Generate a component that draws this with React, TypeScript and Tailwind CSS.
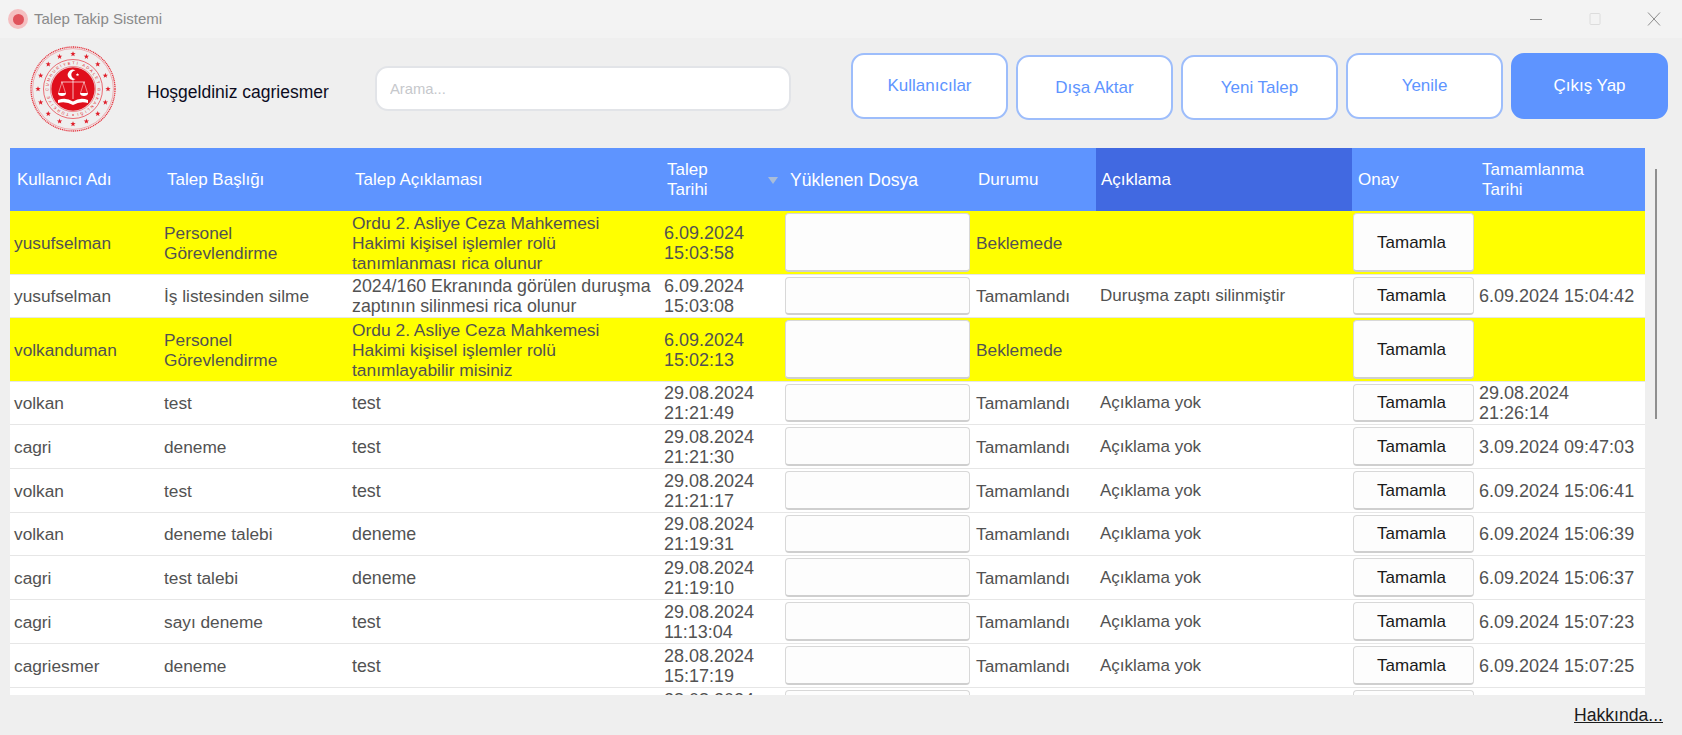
// Talep Takip Sistemi - request tracking window

import React from 'react';

const columns = 'grid grid-cols-[150px_188px_312px_124px_188px_124px_256px_123px_170px]';

type Row = {
  user: string;
  title: string;
  desc: string[];
  date: string[];
  status: string;
  note: string;
  done: string[];
  height: string;
  yellow?: boolean;
};

const rows: Row[] = [
  { user: 'yusufselman', title: 'Personel Görevlendirme', desc: ['Ordu 2. Asliye Ceza Mahkemesi', 'Hakimi kişisel işlemler rolü', 'tanımlanması rica olunur'], date: ['6.09.2024', '15:03:58'], status: 'Beklemede', note: '', done: [], height: 'h-[63.7px]', yellow: true },
  { user: 'yusufselman', title: 'İş listesinden silme', desc: ['2024/160 Ekranında görülen duruşma', 'zaptının silinmesi rica olunur'], date: ['6.09.2024', '15:03:08'], status: 'Tamamlandı', note: 'Duruşma zaptı silinmiştir', done: ['6.09.2024 15:04:42'], height: 'h-[43px]' },
  { user: 'volkanduman', title: 'Personel Görevlendirme', desc: ['Ordu 2. Asliye Ceza Mahkemesi', 'Hakimi kişisel işlemler rolü', 'tanımlayabilir misiniz'], date: ['6.09.2024', '15:02:13'], status: 'Beklemede', note: '', done: [], height: 'h-[64.3px]', yellow: true },
  { user: 'volkan', title: 'test', desc: ['test'], date: ['29.08.2024', '21:21:49'], status: 'Tamamlandı', note: 'Açıklama yok', done: ['29.08.2024', '21:26:14'], height: 'h-[43px]' },
  { user: 'cagri', title: 'deneme', desc: ['test'], date: ['29.08.2024', '21:21:30'], status: 'Tamamlandı', note: 'Açıklama yok', done: ['3.09.2024 09:47:03'], height: 'h-[43.8px]' },
  { user: 'volkan', title: 'test', desc: ['test'], date: ['29.08.2024', '21:21:17'], status: 'Tamamlandı', note: 'Açıklama yok', done: ['6.09.2024 15:06:41'], height: 'h-[43.8px]' },
  { user: 'volkan', title: 'deneme talebi', desc: ['deneme'], date: ['29.08.2024', '21:19:31'], status: 'Tamamlandı', note: 'Açıklama yok', done: ['6.09.2024 15:06:39'], height: 'h-[43.8px]' },
  { user: 'cagri', title: 'test talebi', desc: ['deneme'], date: ['29.08.2024', '21:19:10'], status: 'Tamamlandı', note: 'Açıklama yok', done: ['6.09.2024 15:06:37'], height: 'h-[43.8px]' },
  { user: 'cagri', title: 'sayı deneme', desc: ['test'], date: ['29.08.2024', '11:13:04'], status: 'Tamamlandı', note: 'Açıklama yok', done: ['6.09.2024 15:07:23'], height: 'h-[43.8px]' },
  { user: 'cagriesmer', title: 'deneme', desc: ['test'], date: ['28.08.2024', '15:17:19'], status: 'Tamamlandı', note: 'Açıklama yok', done: ['6.09.2024 15:07:25'], height: 'h-[43.8px]' },
  { user: '', title: '', desc: [''], date: ['28.08.2024', '15:10:02'], status: '', note: '', done: [], height: 'h-[43.8px]' },
];

function starPoints(cx: number, cy: number, r: number) {
  const pts: string[] = [];
  for (let i = 0; i < 10; i++) {
    const rad = i % 2 === 0 ? r : r * 0.42;
    const a = (Math.PI / 5) * i - Math.PI / 2;
    pts.push(`${(cx + rad * Math.cos(a)).toFixed(2)},${(cy + rad * Math.sin(a)).toFixed(2)}`);
  }
  return pts.join(' ');
}

function Seal() {
  const stars = Array.from({ length: 16 }, (_, i) => (Math.PI / 8) * i);
  return (
    <svg viewBox="0 0 88 86" className="w-[88px] h-[86px] shrink-0">
      <circle cx="44" cy="43" r="42" fill="none" stroke="#e5323d" strokeWidth="1.3" strokeDasharray="1.2 0.7" />
      <circle cx="44" cy="43" r="40.4" fill="none" stroke="#ee6a72" strokeWidth="0.5" />
      {stars.map((a) => (
        <polygon key={a} points={starPoints(44 + 35 * Math.cos(a), 43 + 35 * Math.sin(a), 2.8)} fill="#e01f2b" />
      ))}
      <circle cx="44" cy="43" r="29.5" fill="none" stroke="#e5323d" strokeWidth="0.7" />
      <circle cx="44" cy="43" r="22.6" fill="none" stroke="#e5323d" strokeWidth="0.5" />
      <path id="sealRing" d="M44 67.6 A24.6 24.6 0 1 1 44.01 67.6" fill="none" />
      <text fontSize="4" fontWeight="400" fill="#e01f2b" fontFamily="'Liberation Sans', sans-serif">
        <textPath href="#sealRing" startOffset="4" textLength="146">TÜRKİYE CUMHURİYETİ ADALET BAKANLIĞI</textPath>
      </text>
      <circle cx="44" cy="43" r="21.7" fill="#e00f1c" />
      <path d="M46.5 24.5 a5 5 0 1 0 0 8.4 a4.1 4.1 0 1 1 0 -8.4z" fill="#fff" />
      <polygon points={starPoints(48.5, 28.7, 1.8)} fill="#fff" />
      <g stroke="#fff" strokeWidth="0.7" fill="none">
        <path d="M44 33 V53" />
        <path d="M32 36 H56" />
        <path d="M33 36 L29.5 47 M33 36 L36.5 47 M55 36 L51.5 47 M55 36 L58.5 47" strokeWidth="0.5" />
      </g>
      <path d="M29 47 H37 A4 3 0 0 1 29 47z M51 47 H59 A4 3 0 0 1 51 47z" fill="#fff" />
      <path d="M29 54 Q37 51 44 55.5 Q51 51 59 54 V57 Q51 55 44 59 Q37 55 29 57z" fill="#fff" />
      <circle cx="44" cy="69" r="0.8" fill="#e01f2b" />
    </svg>
  );
}

function TitleBar() {
  return (
    <div className="h-[38px] shrink-0 bg-[#f3f3f3] flex items-center">
      <div className="ml-[8px] w-[20px] h-[20px] rounded-full bg-[#f5bfc1] flex items-center justify-center">
        <div className="w-[11px] h-[11px] rounded-full bg-[#e0535c]" />
      </div>
      <span className="ml-[6px] text-[15px] text-[#8a8a8a]">Talep Takip Sistemi</span>
      <div className="ml-auto flex items-center">
        <svg width="14" height="14" viewBox="0 0 14 14" className="mr-[45px]">
          <path d="M1 7.5 H13" stroke="#8c8c8c" strokeWidth="1" />
        </svg>
        <svg width="14" height="14" viewBox="0 0 14 14" className="mr-[45px]">
          <rect x="2" y="1.5" width="10" height="11" rx="1" fill="none" stroke="#dcdcdc" strokeWidth="1" />
        </svg>
        <svg width="14" height="14" viewBox="0 0 14 14" className="mr-[21px]">
          <path d="M1 0.5 L13 13.5 M13 0.5 L1 13.5" stroke="#8c8c8c" strokeWidth="1" />
        </svg>
      </div>
    </div>
  );
}

function TopButton({ label, low, solid }: { label: string; low?: boolean; solid?: boolean }) {
  return (
    <button
      className={`w-[157px] rounded-[13px] border-2 text-[17px] flex items-center justify-center ${
        low ? 'mt-[2px] h-[65px]' : 'h-[66px]'
      } ${solid ? 'bg-[#5e94ff] border-[#5e94ff] text-white' : 'bg-white border-[#9dbdfb] text-[#5e94ff]'}`}
    >
      {label}
    </button>
  );
}

function Header() {
  return (
    <div className="h-[110px] shrink-0 flex items-start">
      <div className="ml-[29px] mt-[8px]">
        <Seal />
      </div>
      <span className="ml-[30px] mt-[41px] text-[17.5px] text-[#0c0c1e]">Hoşgeldiniz cagriesmer</span>
      <input
        placeholder="Arama..."
        className="ml-[46px] mt-[28px] w-[416px] h-[45px] rounded-[13px] border-2 border-[#e2e4e8] bg-white px-[13px] text-[14.8px] outline-none placeholder:text-[#c6c8cc]"
      />
      <div className="ml-auto mr-[14px] mt-[15px] flex items-start gap-[8px]">
        <TopButton label="Kullanıcılar" />
        <TopButton label="Dışa Aktar" low />
        <TopButton label="Yeni Talep" low />
        <TopButton label="Yenile" />
        <TopButton label="Çıkış Yap" solid />
      </div>
    </div>
  );
}

function TableHead() {
  return (
    <div className={`${columns} h-[63px] bg-[#5e94ff] text-white text-[17px] leading-[20px]`}>
      <div className="flex items-center pl-[7px]">Kullanıcı Adı</div>
      <div className="flex items-center pl-[7px]">Talep Başlığı</div>
      <div className="flex items-center pl-[7px]">Talep Açıklaması</div>
      <div className="relative flex items-center pl-[7px]">
        <span>Talep<br />Tarihi</span>
        <span className="absolute right-[6px] top-[29px] border-x-[5px] border-t-[7px] border-x-transparent border-t-[#a9bdd9]" />
      </div>
      <div className="flex items-center pl-[6px] text-[17.6px]">Yüklenen Dosya</div>
      <div className="flex items-center pl-[6px]">Durumu</div>
      <div className="flex items-center pl-[5px] bg-[#4169e1]">Açıklama</div>
      <div className="flex items-center pl-[6px]">Onay</div>
      <div className="flex items-center pl-[7px]">Tamamlanma<br />Tarihi</div>
    </div>
  );
}

function CellButton({ label }: { label?: string }) {
  return (
    <button className="w-full h-full rounded-[4px] border border-[#d8d8d8] border-b-2 border-b-[#cfcfcf] bg-[#fdfdfd] pt-[2px] pr-[4px] text-[17px] text-[#1a1a1a]">
      {label}
    </button>
  );
}

function TableRow({ row }: { row: Row }) {
  return (
    <div
      className={`${columns} ${row.height} shrink-0 border-b-[1.5px] border-[#e6e6e6] text-[17.3px] leading-[20px] text-[#525252] ${
        row.yellow ? 'bg-[#ffff00]' : 'bg-white'
      }`}
    >
      <div className="flex items-center pl-[4px] pt-[1px]">{row.user}</div>
      <div className="flex items-center pl-[4px] pr-[20px] pt-[1px]">{row.title}</div>
      <div className={`flex flex-col justify-center pl-[4px] pt-[1px] whitespace-nowrap ${row.yellow ? 'text-[17.4px]' : 'text-[17.8px]'}`}>
        {row.desc.map((line, i) => (
          <div key={i}>{line}</div>
        ))}
      </div>
      <div className="flex flex-col justify-center pl-[4px] pt-[1px] text-[18px]">
        {row.date.map((line) => (
          <div key={line}>{line}</div>
        ))}
      </div>
      <div className="pl-[1px] pr-[2px] py-[2px]">
        <CellButton />
      </div>
      <div className="flex items-center pl-[4px] pt-[1px]">{row.status}</div>
      <div className="flex items-center pl-[4px] pt-[1px] text-[17px]">{row.note}</div>
      <div className="pl-[1px] pr-[1px] py-[2px]">
        <CellButton label="Tamamla" />
      </div>
      <div className="flex flex-col justify-center pl-[4px] pt-[1px] whitespace-nowrap text-[18px]">
        {row.done.map((line) => (
          <div key={line}>{line}</div>
        ))}
      </div>
    </div>
  );
}

export default function App() {
  return (
    <div className="w-[1682px] h-[735px] overflow-hidden bg-[#efefef] flex flex-col font-['Liberation_Sans',Arial,sans-serif]">
      <TitleBar />
      <Header />
      <div className="flex h-[547px] shrink-0 pl-[10px]">
        <div className="w-[1635px] h-full overflow-hidden bg-white">
          <TableHead />
          {rows.map((row, i) => (
            <TableRow key={i} row={row} />
          ))}
        </div>
        <div className="ml-[10px] mt-[21px] w-[2px] h-[250px] bg-[#8f8f8f]" />
      </div>
      <div className="flex-1 flex items-center justify-end pr-[19px]">
        <span className="text-[17.6px] text-[#1c1c1c] underline">Hakkında...</span>
      </div>
    </div>
  );
}
